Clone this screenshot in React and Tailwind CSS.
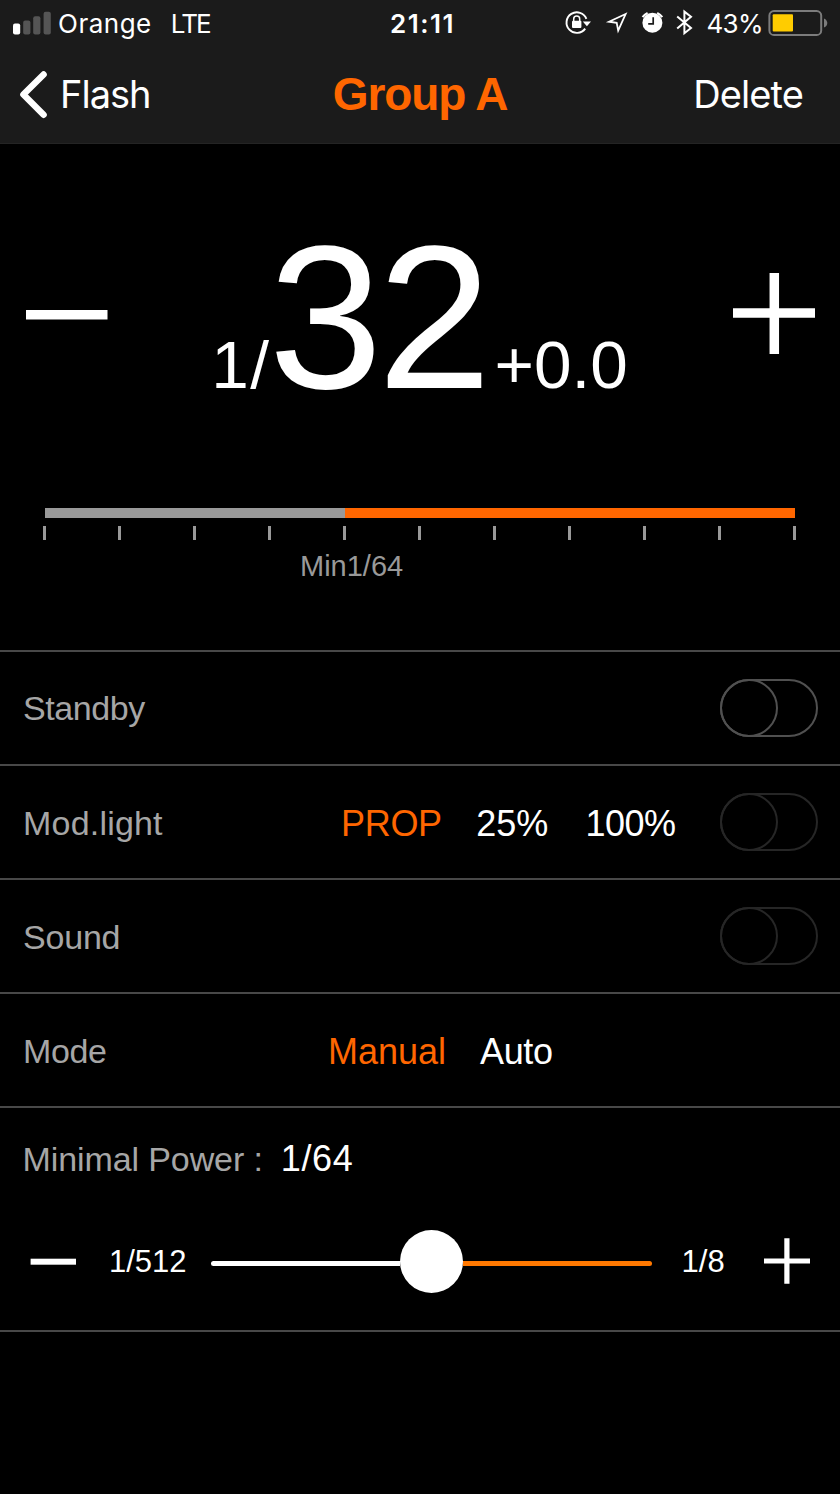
import React, { useState } from "react";

// =========================================
// STATUS BAR
// =========================================
const SignalIcon = () => (
  <svg width="38" height="24" viewBox="0 0 38 24">
    <rect x="0" y="12.5" width="7.2" height="11" rx="2" fill="#fff" />
    <rect x="10.2" y="9.5" width="7.2" height="14" rx="2" fill="#555" />
    <rect x="20.2" y="5.3" width="7.2" height="18.2" rx="2" fill="#555" />
    <rect x="30.6" y="0.8" width="7.2" height="22.7" rx="2" fill="#555" />
  </svg>
);

const StatusIcons = () => (
  <svg width="130" height="30" viewBox="564 8 130 30" fill="none">
    {/* rotation lock */}
    <path
      d="M586.4 18.8 A10.3 10.3 0 1 0 585.2 28.6"
      stroke="#fff"
      strokeWidth="1.9"
    />
    <path d="M582.8 21.4 H591 L586.9 26.2 Z" fill="#fff" />
    <rect x="572" y="20.8" width="9.4" height="7.2" rx="1" fill="#fff" />
    <path
      d="M573.7 21.5 V19 A3 3 0 0 1 579.7 19 V21.5"
      stroke="#fff"
      strokeWidth="1.5"
    />
    {/* location */}
    <path
      d="M625.6 14 L609 21.7 L616.7 22.8 L618.2 30.6 Z"
      stroke="#fff"
      strokeWidth="1.8"
      strokeMiterlimit="8"
    />
    {/* alarm */}
    <circle cx="652.4" cy="22.8" r="10" fill="#fff" />
    <path d="M653.2 17.2 V23.8 H648.2" stroke="#1b1b1b" strokeWidth="1.7" />
    <path
      d="M642.6 17.2 A11.8 11.8 0 0 1 647.6 12.9 M657.2 12.9 A11.8 11.8 0 0 1 662.2 17.2"
      stroke="#fff"
      strokeWidth="2.2"
    />
    {/* bluetooth */}
    <path
      d="M677.2 16.4 L691 28 L684.4 33.2 V11.6 L691 16.8 L677.2 28.6"
      stroke="#fff"
      strokeWidth="2"
    />
  </svg>
);

const BatteryIcon = () => (
  <svg width="60" height="28" viewBox="768 9 60 28">
    <rect
      x="769.4"
      y="11"
      width="51.8"
      height="24"
      rx="4.6"
      fill="none"
      stroke="#7c7c7c"
      strokeWidth="2"
    />
    <rect x="772.7" y="14.2" width="20.3" height="17.4" rx="1" fill="#ffcc00" />
    <path d="M824 18.4 C828.4 20 828.4 26 824 27.6 Z" fill="#7c7c7c" />
  </svg>
);

// =========================================
// CONTROLS
// =========================================
const Toggle = ({ dim }) => {
  const [on, setOn] = useState(false);
  return (
    <button
      onClick={() => !dim && setOn(!on)}
      className={`ml-auto w-[98px] h-[58px] rounded-full border-2 ${dim ? "border-[#262626]" : "border-[#505050]"}`}
    >
      <div
        className={`w-[58px] h-[58px] -mt-[2px] rounded-full border-2 ${on ? "ml-[38px]" : "-ml-[2px]"} ${dim ? "border-[#262626]" : "border-[#505050]"}`}
      />
    </button>
  );
};

const Row = ({ label, labelClass, children }) => (
  <div className="h-[114px] border-t-2 border-[#484848] flex items-center pl-[23px] pr-[22px]">
    <span className={`text-[34px] text-[#a6a6a6] ${labelClass}`}>{label}</span>
    {children}
  </div>
);

const TICKS = Array.from({ length: 11 });

export default function App() {
  const [light, setLight] = useState("PROP");
  const [mode, setMode] = useState("Manual");

  return (
    <div className="w-[840px] h-[1494px] bg-black text-white overflow-hidden font-['Liberation_Sans',Arial,sans-serif]">
      <header className="h-[144px] bg-[#1b1b1b] border-b border-[#242424] font-['Inter',sans-serif]">
        <div className="h-[46px] grid grid-cols-[390px_1fr_auto] items-center text-[26px]">
          <div className="flex items-center pl-[13px]">
            <SignalIcon />
            <span className="ml-[7px] tracking-[0.5px]">Orange</span>
            <span className="ml-[19px] tracking-[-1.8px]">LTE</span>
          </div>
          <span className="font-semibold tracking-[1.5px]">21:11</span>
          <div className="flex items-center pr-[12px]">
            <StatusIcons />
            <span className="ml-[12px] mr-[5px] tracking-[-0.6px]">43%</span>
            <BatteryIcon />
          </div>
        </div>
        <div className="h-[97px] grid grid-cols-[1fr_auto_1fr] items-center text-[38px]">
          <button className="flex items-center pl-[19px]">
            <svg width="28" height="50" viewBox="0 0 28 50">
              <path
                d="M24.6 4.4 L4.4 24.6 L24.6 44.8"
                fill="none"
                stroke="#fff"
                strokeWidth="6.4"
                strokeLinecap="round"
                strokeLinejoin="round"
              />
            </svg>
            <span className="ml-[13px] tracking-[-1px]">Flash</span>
          </button>
          <h1 className="pb-[2px] text-[46px] leading-none tracking-[-1.1px] font-bold text-[#ff6600] font-['Liberation_Sans',Arial,sans-serif]">
            Group A
          </h1>
          <button className="justify-self-end pr-[37px] tracking-[-0.9px]">
            Delete
          </button>
        </div>
      </header>

      {/* power */}
      <section className="h-[506px] flex flex-col">
        <div className="h-[364px] flex items-start justify-between pl-[26px] pr-[25px]">
          <svg className="mt-[129px]" width="82" height="82" viewBox="0 0 82 82">
            <rect x="0" y="37" width="81.5" height="9.5" fill="#fff" />
          </svg>
          <div className="mt-[70px] mr-[2px] flex items-baseline leading-none text-[67.5px]">
            <span className="tracking-[1.5px]">1/</span>
            <span className="-ml-[2px] text-[205px] tracking-[-5px]">32</span>
            <span className="ml-[8px]">+0.0</span>
          </div>
          <svg className="mt-[129px]" width="82" height="82" viewBox="0 0 82 82">
            <path d="M0 40 H82 M41.3 0 V81" stroke="#fff" strokeWidth="9.5" />
          </svg>
        </div>
        <div className="mx-[45px] h-[10px] flex">
          <div className="w-[300px] bg-[#999]" />
          <div className="flex-1 bg-[#ff6600]" />
        </div>
        <div className="mt-[8px] ml-[43px] mr-[44px] flex justify-between">
          {TICKS.map((_, i) => (
            <div key={i} className="w-[3px] h-[14px] bg-[#999]" />
          ))}
        </div>
        <span className="mt-[5px] pl-[300px] text-[29px] text-[#999]">
          Min1/64
        </span>
      </section>

      {/* settings */}
      <Row label="Standby" labelClass="tracking-[-0.4px]">
        <Toggle />
      </Row>
      <Row label="Mod.light" labelClass="w-[318px] pt-[3px] tracking-[0.2px]">
        <div className="flex pt-[3px] text-[36px]">
          <button
            onClick={() => setLight("PROP")}
            className={`tracking-[-0.3px] ${light === "PROP" ? "text-[#ff6600]" : ""}`}
          >
            PROP
          </button>
          <button
            onClick={() => setLight("25%")}
            className={`ml-[34.5px] ${light === "25%" ? "text-[#ff6600]" : ""}`}
          >
            25%
          </button>
          <button
            onClick={() => setLight("100%")}
            className={`ml-[37px] tracking-[-0.5px] ${light === "100%" ? "text-[#ff6600]" : ""}`}
          >
            100%
          </button>
        </div>
        <Toggle dim />
      </Row>
      <Row label="Sound" labelClass="pt-[2px] tracking-[-0.2px]">
        <Toggle dim />
      </Row>
      <Row label="Mode" labelClass="w-[305px] pt-[2px] tracking-[-0.4px]">
        <div className="flex pt-[3px] text-[36px]">
          <button
            onClick={() => setMode("Manual")}
            className={mode === "Manual" ? "text-[#ff6600]" : ""}
          >
            Manual
          </button>
          <button
            onClick={() => setMode("Auto")}
            className={`ml-[34px] tracking-[-0.4px] ${mode === "Auto" ? "text-[#ff6600]" : ""}`}
          >
            Auto
          </button>
        </div>
      </Row>

      {/* minimal power */}
      <section className="h-[226px] border-y-2 border-[#484848]">
        <div className="h-[102px] flex items-baseline pl-[22.5px] pt-[24px]">
          <span className="text-[34px] text-[#a6a6a6] tracking-[-0.1px]">
            Minimal Power :
          </span>
          <span className="ml-[18px] text-[36px] tracking-[0.6px]">1/64</span>
        </div>
        <div className="h-[104px] flex items-center pl-[30px] pr-[30px] text-[31px]">
          <svg className="-mt-[2px]" width="46" height="46" viewBox="0 0 46 46">
            <rect x="0.6" y="20.7" width="45.4" height="6" fill="#fff" />
          </svg>
          <span className="ml-[33px]">1/512</span>
          <div className="ml-[24px] -mt-[2px] w-[441px] flex items-center">
            <div className="flex-1 h-[5px] rounded-l-full bg-white mt-[4px]" />
            <div className="w-[63px] h-[63px] rounded-full bg-white" />
            <div className="flex-1 h-[5px] rounded-r-full bg-[#ff7800] mt-[4px]" />
          </div>
          <span className="ml-[30px]">1/8</span>
          <svg className="ml-auto -mt-[2px]" width="46" height="46" viewBox="0 0 46 46">
            <path d="M0 23 H46 M22.9 0.3 V45.7" stroke="#fff" strokeWidth="5.2" />
          </svg>
        </div>
      </section>
    </div>
  );
}
